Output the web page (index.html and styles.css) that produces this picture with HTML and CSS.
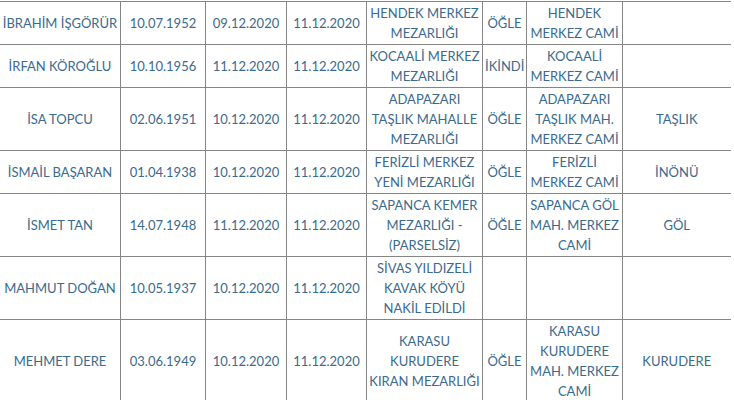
FILE: index.html
```html
<!DOCTYPE html>
<html lang="tr">
<head>
<meta charset="utf-8">
<link rel="stylesheet" href="styles.css">
</head>
<body>
<table class="grid">
  <colgroup>
    <col class="c-name"><col class="c-date"><col class="c-date2"><col class="c-date3">
    <col class="c-place"><col class="c-time"><col class="c-mosque"><col class="c-hood">
  </colgroup>
  <tbody>
    <tr class="r2"><td>İBRAHİM İŞGÖRÜR</td><td>10.07.1952</td><td>09.12.2020</td><td>11.12.2020</td><td>HENDEK MERKEZ MEZARLIĞI</td><td>ÖĞLE</td><td>HENDEK MERKEZ CAMİ</td><td></td></tr>
    <tr class="r2"><td>İRFAN KÖROĞLU</td><td>10.10.1956</td><td>11.12.2020</td><td>11.12.2020</td><td>KOCAALİ MERKEZ MEZARLIĞI</td><td>İKİNDİ</td><td>KOCAALİ MERKEZ CAMİ</td><td></td></tr>
    <tr><td>İSA TOPCU</td><td>02.06.1951</td><td>10.12.2020</td><td>11.12.2020</td><td>ADAPAZARI TAŞLIK MAHALLE MEZARLIĞI</td><td>ÖĞLE</td><td>ADAPAZARI TAŞLIK MAH. MERKEZ CAMİ</td><td>TAŞLIK</td></tr>
    <tr><td>İSMAİL BAŞARAN</td><td>01.04.1938</td><td>10.12.2020</td><td>11.12.2020</td><td>FERİZLİ MERKEZ YENİ MEZARLIĞI</td><td>ÖĞLE</td><td>FERİZLİ MERKEZ CAMİ</td><td>İNÖNÜ</td></tr>
    <tr><td>İSMET TAN</td><td>14.07.1948</td><td>11.12.2020</td><td>11.12.2020</td><td>SAPANCA KEMER MEZARLIĞI - (PARSELSİZ)</td><td>ÖĞLE</td><td>SAPANCA GÖL MAH. MERKEZ CAMİ</td><td>GÖL</td></tr>
    <tr><td>MAHMUT DOĞAN</td><td>10.05.1937</td><td>10.12.2020</td><td>11.12.2020</td><td>SİVAS YILDIZELİ KAVAK KÖYÜ NAKİL EDİLDİ</td><td></td><td></td><td></td></tr>
    <tr><td>MEHMET DERE</td><td>03.06.1949</td><td>10.12.2020</td><td>11.12.2020</td><td>KARASU KURUDERE KIRAN MEZARLIĞI</td><td>ÖĞLE</td><td>KARASU KURUDERE MAH. MERKEZ CAMİ</td><td>KURUDERE</td></tr>
  </tbody>
</table>
</body>
</html>
```

FILE: styles.css
```css
html, body {
  margin: 0;
  padding: 0;
  background: #ffffff;
  overflow: hidden;
}
body {
  font-family: Lato, "Open Sans", sans-serif;
  font-size: 13px;
  color: #3a6a8e;
}
.grid {
  border-collapse: collapse;
  table-layout: fixed;
  width: 731px;
  margin: 1px 0 0 -1px;
}
.grid td {
  border: 1px solid #858585;
  border-right-width: 1px;
  padding: 1px 2px;
  line-height: 20px;
  text-align: center;
  vertical-align: middle;
}
.grid tr td:last-child { border-right: none; }
.c-name { width: 121px; }
.c-date { width: 85px; }
.c-date2 { width: 81px; }
.c-date3 { width: 80px; }
.c-place { width: 116px; }
.c-time { width: 44px; }
.c-mosque { width: 96px; }
.c-hood { width: 108px; }
```
